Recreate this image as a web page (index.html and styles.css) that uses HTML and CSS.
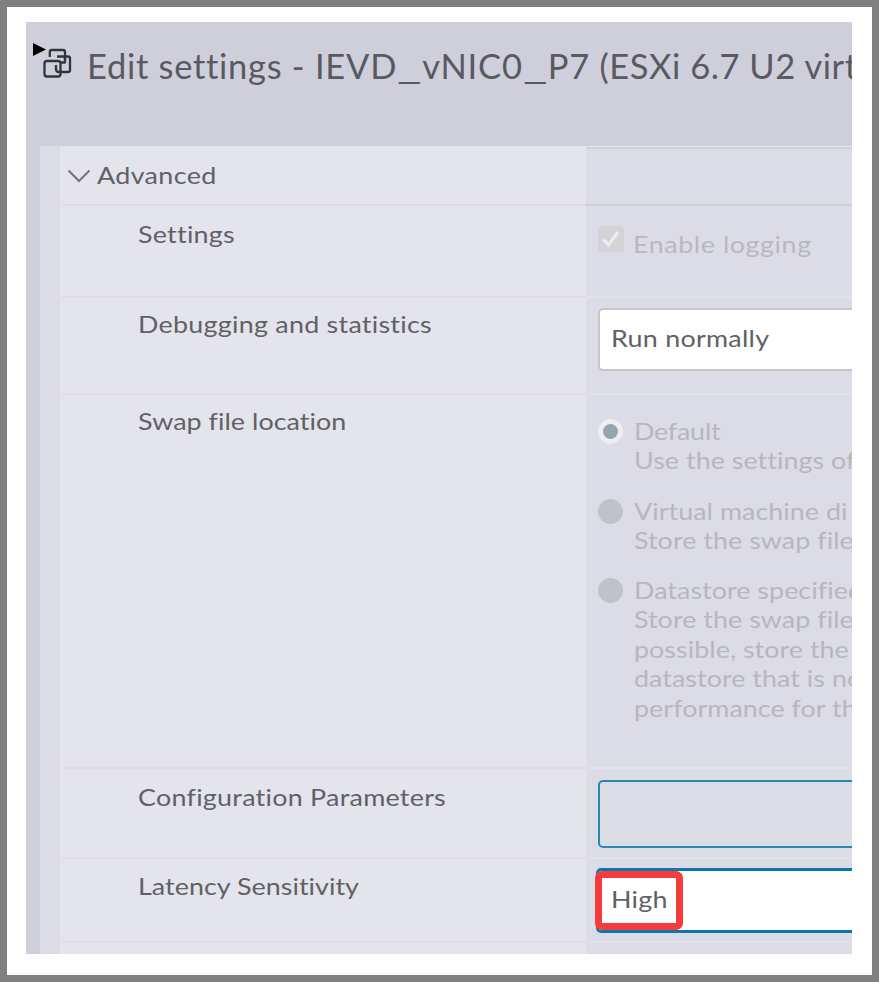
FILE: index.html
```html
<!DOCTYPE html>
<html lang="en">
<head>
<meta charset="utf-8">
<title>Edit settings</title>
<link rel="stylesheet" href="styles.css">
</head>
<body>
<main class="dialog">
  <header class="header">
    <svg class="vm-icon" width="42" height="40" viewBox="0 0 42 40" fill="none">
      <path d="M0 2v13l13-6.500z" fill="#000"/>
      <g stroke="#333438" stroke-width="2.300" stroke-linejoin="round">
        <path d="M16.800 16V11q0-2 2-2H30q2 0 2 2v8"/>
        <rect x="11.500" y="20" width="16" height="15.500" rx="2.500"/>
        <path d="M24 15.500H35q2 0 2 2V29q0 2-2 2H26q-3 0-3-3v-4M32 15v6.500h-4"/>
      </g>
    </svg>
    <h1 class="title">Edit settings - <span class="name">IEVD<span class="underscore">_</span>vNIC0<span class="underscore">_</span>P7</span> <span class="compat">(ESXi 6.7 U2 virt</span></h1>
  </header>
  <section class="panel">
    <div class="row row-advanced">
      <div class="label toggle"><svg width="24" height="15" viewBox="0 0 24 15" fill="none"><path d="M1.500 2.500 12 13 22.500 2.500" stroke="#737377" stroke-width="2"/></svg><span class="text loose">Advanced</span></div>
      <div class="value"></div>
    </div>
    <div class="row row-settings">
      <div class="label"><span class="text">Settings</span></div>
      <div class="value check-line">
        <svg class="checkbox" width="26" height="26" viewBox="0 0 26 26" fill="none"><rect width="26" height="26" rx="4" fill="#d4d4d8"/><path d="m5.500 13.500 5 5.500 9.500-13" stroke="#eeeef1" stroke-width="3"/></svg>
        <span class="text looser">Enable logging</span>
      </div>
    </div>
    <div class="row row-debug">
      <div class="label"><span class="text">Debugging and statistics</span></div>
      <div class="value"><div class="select"><span class="text">Run normally</span></div></div>
    </div>
    <div class="row row-swap">
      <div class="label"><span class="text tight">Swap file location</span></div>
      <div class="value radios">
        <div class="option"><i class="radio checked"></i><p class="text tight"><span class="default">Default</span><br>Use the settings of</p></div>
        <div class="option"><i class="radio"></i><p class="text tight">Virtual machine di<br>Store the swap file</p></div>
        <div class="option"><i class="radio"></i><p class="text tight">Datastore specified<br>Store the swap file<br>possible, store the<br>datastore that is no<br>performance for th</p></div>
      </div>
    </div>
    <div class="row row-config">
      <div class="label"><span class="text">Configuration Parameters</span></div>
      <div class="value"><div class="button"></div></div>
    </div>
    <div class="row row-latency">
      <div class="label"><span class="text tight">Latency Sensitivity</span></div>
      <div class="value"><div class="select focused"><span class="text">High</span><i class="callout"></i></div></div>
    </div>
    <div class="row row-last"><div class="label"></div><div class="value"></div></div>
  </section>
</main>
</body>
</html>
```
FILE: styles.css
```css
* { box-sizing: border-box; }
html { height: 100%; }
body {
  margin: 0;
  width: 879px;
  height: 982px;
  padding: 15px 20px 21px 19px;
  border: 7px solid #808080;
  background: #fff;
  font-family: Lato, "Open Sans", sans-serif;
  font-size: 24px;
  line-height: 29.4px;
  font-variant-ligatures: none;
  color: #616165;
  overflow: hidden;
}
.dialog {
  width: 826px;
  height: 932px;
  background: #cfcfdc;
  overflow: hidden;
  white-space: nowrap;
}
.header { display: flex; height: 124px; padding: 19px 0 0 7px; }
.vm-icon { flex: none; width: 42px; height: 40px; }
.title {
  margin: 3px 0 0 12px;
  font-size: 34.5px;
  line-height: 44px;
  font-weight: 400;
  letter-spacing: 0.7px;
  color: #595a5f;
}
.name { letter-spacing: 0.8px; }
.compat { letter-spacing: 0.55px; }
.underscore {
  display: inline-block;
  width: 25px;
  letter-spacing: 0;
  transform: scaleX(1.55);
  transform-origin: 0 50%;
}
.text {
  display: inline-block;
  transform: translateY(-1px) scaleX(1.12);
  transform-origin: 0 50%;
  letter-spacing: 0.23px;
}
.tight { letter-spacing: 0.03px; }
.loose { letter-spacing: 0.32px; }
.looser { letter-spacing: 0.5px; }
.default { letter-spacing: -0.2px; }
.panel {
  margin-left: 14px;
  padding-left: 20px;
  background: linear-gradient(90deg, #dcdce6 20px, #e4e4ed 20px);
}
.row { display: grid; grid-template-columns: 526px 1fr; }
.row-advanced { height: 60px; }
.row-settings { height: 92px; }
.row-debug { height: 97px; }
.row-swap { height: 374px; }
.row-config { height: 90px; }
.row-latency { height: 84px; }
.row-last { height: 20px; }
.label {
  margin-left: 2px;
  padding: 14px 0 0 76px;
  border-bottom: 2px solid #dcdce1;
}
.row-debug .label, .row-swap .label { padding-top: 12px; }
.row-latency .label { padding-top: 13px; }
.value {
  min-width: 0;
  padding-left: 12px;
  background: #dcdce6;
  border-bottom: 2px solid #e2e2eb;
  overflow: hidden;
}
.row-advanced .value {
  border-top: 2px solid #d0d0d9;
  border-bottom-color: #d0d0d9;
}
.row-advanced .value, .row-advanced .label { margin-top: 1px; }
.toggle { display: flex; align-items: center; gap: 6px; padding: 0 0 0 5px; }
.check-line { display: flex; gap: 9px; padding-top: 20px; color: #b9b9bd; }
.checkbox { flex: none; }
.check-line .text { padding-top: 4px; }
.select, .button { width: 600px; border-radius: 5px; }
.select { height: 63px; margin-top: 10px; padding: 14px 11px; background: #fff; border: 2px solid #c6c6c8; }
.button { height: 68px; margin-top: 11px; border: 2px solid #2987b0; }
.focused {
  position: relative;
  height: 65px;
  width: 602px;
  margin: 9px 0 0 -2px;
  padding: 14px 12px;
  border: 3px solid #0879aa;
}
.callout {
  position: absolute;
  left: -4px;
  top: 0;
  width: 88px;
  height: 59px;
  border: 7px solid #f63b3d;
  border-radius: 7px;
}
.radios { padding-top: 22px; color: #b7b7bb; }
.option { display: flex; gap: 11px; margin-bottom: 20.7px; }
.option p { margin: 0; }
.radio { flex: none; width: 25px; height: 25px; margin-top: 2px; border-radius: 50%; background: #c1c1ca; }
.checked { background: #97a3ae; border: 5px solid #eeeef2; }
```
